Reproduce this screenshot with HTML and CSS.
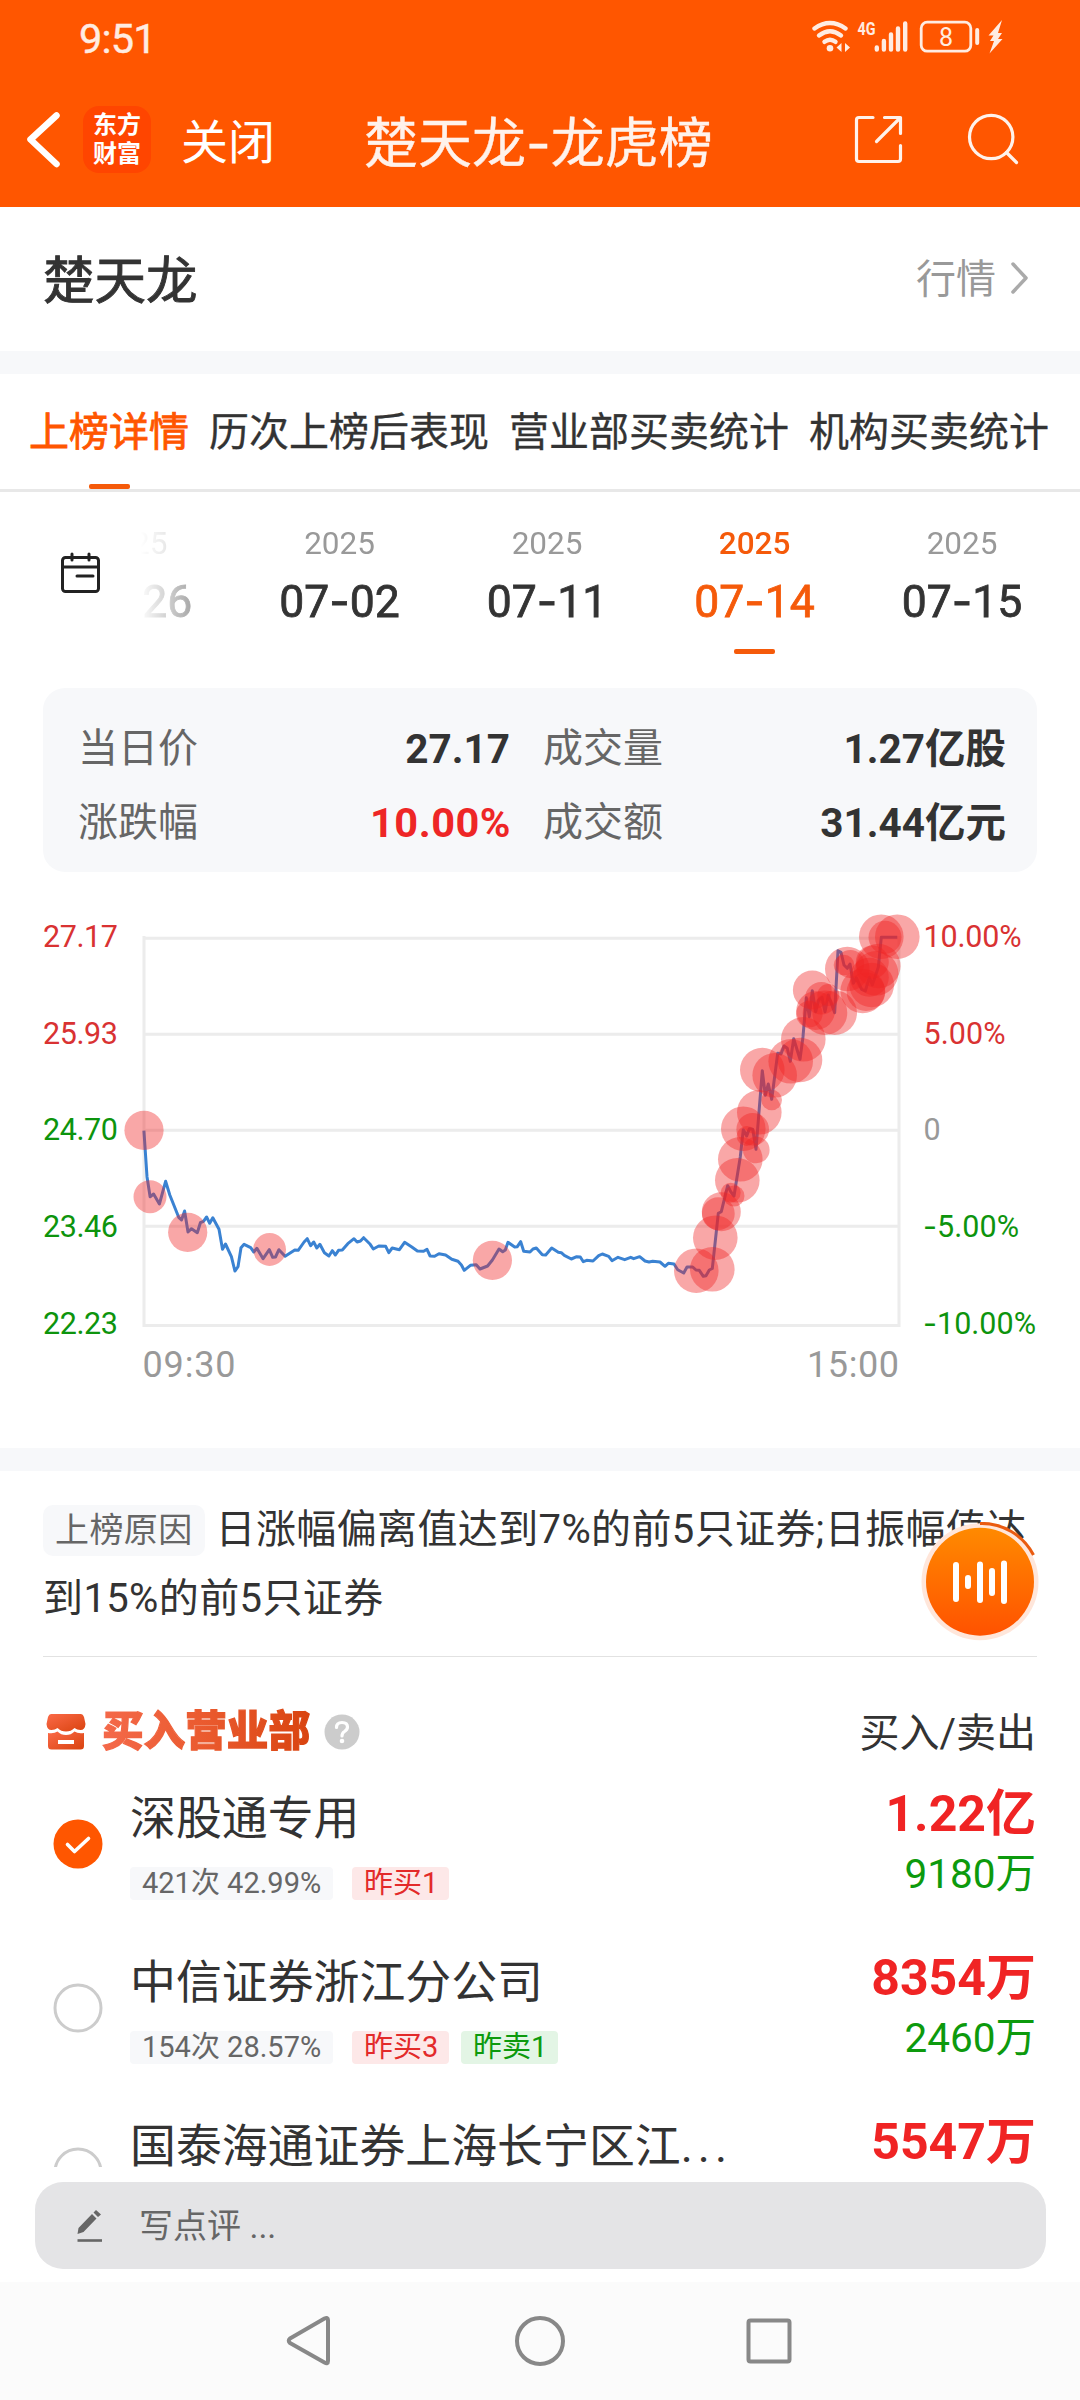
FILE: index.html
```html
<!DOCTYPE html>
<html lang="zh-CN">
<head>
<meta charset="utf-8">
<title>楚天龙-龙虎榜</title>
<link rel="stylesheet" href="styles.css">
</head>
<body>
<header class="top">
  <div class="status">
    <span class="clock">9:51</span>
    <svg class="status-icons" width="196" height="40" viewBox="810 17 196 40">
      <g fill="none" stroke="#ffece2" stroke-width="4.4" stroke-linecap="round">
        <path d="M814.500 28.500Q830 17.500 845.500 28.500"/>
        <path d="M819 35.500Q830 27 841 35.500"/>
        <path d="M824.500 41.800Q830 37.500 835.500 41.800"/>
      </g>
      <circle cx="830" cy="48.300" r="3.300" fill="#ffece2"/>
      <path fill="#ffece2" d="M836.500 47.500L841.500 43V52ZM850 47.500L845 43V52Z"/>
      <text class="net" x="857.500" y="34.500" textLength="18" lengthAdjust="spacingAndGlyphs">4G</text>
      <g stroke="#ffece2" stroke-width="4.400" stroke-linecap="round">
        <path d="M876.800 47.500V49.500M883.900 41V49.500M891 34.500V49.500M898 28.500V49.500M905.200 23.500V49.500"/>
      </g>
      <rect x="921.200" y="22.200" width="49.600" height="29" rx="6" fill="none" stroke="#ffece2" stroke-width="2.800"/>
      <text class="charge" x="946" y="46" text-anchor="middle">8</text>
      <path d="M977.200 30V43" stroke="#ffece2" stroke-width="4" stroke-linecap="round"/>
      <path fill="#ffece2" d="M1002 20L988.500 35.500H993.500L990 41H994L989.500 53.500L1002.500 39H998L1002 33H998Z"/>
    </svg>
  </div>
  <nav class="nav">
    <svg class="back" width="40" height="60" viewBox="24 110 40 60"><path d="M56.500 115.500L30.500 139.500L56.500 164" fill="none" stroke="#fff" stroke-width="6.500" stroke-linecap="round" stroke-linejoin="round"/></svg>
    <div class="logo"><span>东方</span><span>财富</span></div>
    <span class="close">关闭</span>
    <h1 class="title">楚天龙<span class="dash">-</span>龙虎榜</h1>
    <svg class="act" width="180" height="60" viewBox="850 110 180 60" fill="none" stroke="#fff2eb" stroke-width="3.200" stroke-linecap="round" stroke-linejoin="round">
      <path d="M873 117.500H859Q856.500 117.500 856.500 120V159Q856.500 161.500 859 161.500H898Q900.500 161.500 900.500 159V145.500M884.500 117.500H900.500V133.500M899.500 118.500L876.500 141.500"/>
      <circle cx="991.200" cy="137" r="21.700"/><path d="M1006.500 152.500L1016.500 162.500"/>
    </svg>
  </nav>
</header>

<section class="stock">
  <h2>楚天龙</h2>
  <a class="quote">行情<svg width="20" height="34" viewBox="0 0 20 34"><path d="M3 3L16 17L3 31" fill="none" stroke="#aaa" stroke-width="3.500" stroke-linecap="round" stroke-linejoin="round"/></svg></a>
</section>

<div class="band"></div>

<nav class="tabs">
  <span class="tab on">上榜详情</span><span class="tab">历次上榜后表现</span><span class="tab">营业部买卖统计</span><span class="tab">机构买卖统计</span>
</nav>

<section class="dates">
  <div class="cal">
    <svg width="44" height="44" viewBox="0 0 44 44" fill="none" stroke="#222" stroke-width="3" stroke-linecap="round">
      <rect x="3.500" y="6.500" width="36" height="34" rx="3"/><path d="M4 16H39M13 3V9M30 3V9M18 25H34"/>
    </svg>
  </div>
  <div class="strip">
    <div class="date"><small>2025</small><b>06<span class="dash">-</span>26</b></div>
    <div class="date"><small>2025</small><b>07<span class="dash">-</span>02</b></div>
    <div class="date"><small>2025</small><b>07<span class="dash">-</span>11</b></div>
    <div class="date on"><small>2025</small><b>07<span class="dash">-</span>14</b></div>
    <div class="date"><small>2025</small><b>07<span class="dash">-</span>15</b></div>
  </div>
</section>

<section class="card">
  <div class="cell"><span>当日价</span><b>27.17</b></div>
  <div class="cell"><span>成交量</span><b>1.27亿股</b></div>
  <div class="cell"><span>涨跌幅</span><b class="up">10.00%</b></div>
  <div class="cell"><span>成交额</span><b>31.44亿元</b></div>
</section>

<svg class="chart" width="1080" height="576" viewBox="0 872 1080 576">
  <path class="grid" d="M144 936V1325.500H899V936M144 938.300H899M144 1034.300H899M144 1130.300H899M144 1226.300H899"/>
  <polyline class="price" points="143.900,1130.700 147,1176.700 150.100,1196.700 153.600,1194 159.400,1204 165.600,1181.300 169.800,1195 178.700,1217.300 181.500,1220 184.600,1211 188,1232 191.500,1228.700 197.300,1232.700 200.400,1222.700 203.500,1221.300 206.600,1217 209.700,1223.300 212.800,1217.700 219,1229.300 222.500,1249.300 225.500,1244 231.400,1256.700 234.900,1271 238,1266.700 241,1247.700 244.100,1244.300 250.700,1247.700 253.800,1252 256.900,1248.300 263.100,1258.700 269.300,1249.700 272.700,1257.300 275.500,1257 278.900,1249.700 285.100,1256.300 294.800,1250 298.200,1250.300 304.100,1242 307.200,1238.700 310.600,1245.700 313.700,1242 316.800,1248 319.900,1244.300 324.400,1252.700 328.900,1256 332.300,1250.700 335.400,1255 338.500,1250.300 342.300,1250 347.800,1243.700 354,1238.700 357.100,1242 360.500,1241 363.600,1237.700 370.200,1244.300 373.300,1249 378.800,1246 385.700,1246.300 388.800,1252.700 392.200,1248 399.400,1249.700 404.600,1242.300 411.800,1247 417.400,1251 423.600,1251.300 427,1249.300 430.100,1256 434.600,1256.300 439,1253.700 445.600,1255 451.800,1259.300 458,1261.300 461.400,1265 464.200,1270.300 470.400,1265.300 476.200,1264.700 480,1269 487.600,1266 492.400,1260 499,1249 502.700,1251.700 505.300,1250 508,1242.300 514.700,1247 517.300,1246.700 520.700,1241.700 523.700,1251.300 530,1252 533,1249 536.300,1248 542.300,1254.700 545.700,1255 551.700,1248 558.300,1252.300 561.300,1252.700 564.300,1255.300 571.300,1259 576.700,1256.700 580.300,1257 583.300,1261.700 586.700,1260.300 593,1261 598.700,1255.700 602.300,1254 608.700,1256.300 612,1260.700 618,1257.300 624.700,1259.700 630.700,1257.300 633.700,1258.700 639.700,1256.700 645,1261 649,1262 652.700,1261.300 660,1262 665,1266.300 668.300,1263.300 674,1264 677.700,1269.700 683.700,1273 687,1267 692.700,1267 696,1270 699.300,1270.300 703.300,1276.300 706,1275.700 709.300,1270 712.300,1268.500 718.300,1213.300 721.300,1211.700 727.700,1185.700 730.700,1191.700 734,1196 740.300,1156.700 743.300,1129.700 746.700,1136 749.300,1128.700 752.700,1129.300 756,1149.300 762.300,1070.700 765.300,1095.300 768.300,1084 771.700,1099.300 777.700,1053.300 781,1054 784,1046 787.300,1048.300 790.300,1061.300 793.700,1038.700 800,1059.300 803,1036.700 806.300,997.700 809.300,1016.700 812.300,990.700 815.700,1011.700 818.700,1000 822,997.300 825,1011.700 828.300,995 834.700,1012.700 838,950.700 841,952.300 844,965 847.300,968.300 850,964 853.300,983.300 856.300,977.700 861.700,989.300 865.300,991 869.300,977.300 872.300,985 878.300,967.300 881.300,937.300 897.300,937.300"/>
  <g class="dots">
    <circle cx="144" cy="1130.300" r="19.600"/><circle cx="150" cy="1196.700" r="16.500"/><circle cx="187.700" cy="1232.300" r="19.600"/><circle cx="269.600" cy="1249.500" r="16.400"/><circle cx="492.400" cy="1260.300" r="19.600"/>
    <circle cx="696.300" cy="1270.700" r="22.300"/><circle cx="712.300" cy="1269.300" r="22.300"/><circle cx="715.300" cy="1237.700" r="22.300"/><circle cx="721.300" cy="1211.700" r="19.500"/><circle cx="718.300" cy="1213.700" r="16.400"/>
    <circle cx="730.700" cy="1192.700" r="10"/><circle cx="734" cy="1196" r="10.500"/><circle cx="737.300" cy="1180.300" r="22.300"/><circle cx="740.300" cy="1159.300" r="22.300"/><circle cx="743.300" cy="1128.700" r="22.300"/>
    <circle cx="746.700" cy="1136" r="10"/><circle cx="752.700" cy="1129.300" r="16.300"/><circle cx="756.300" cy="1150" r="13.300"/><circle cx="759.300" cy="1112.300" r="22.300"/><circle cx="762.300" cy="1070" r="22.300"/>
    <circle cx="771.700" cy="1100" r="10.300"/><circle cx="774.700" cy="1075.300" r="22.300"/><circle cx="790.700" cy="1061.300" r="22.300"/><circle cx="800" cy="1060" r="22.300"/><circle cx="803.300" cy="1039.300" r="22.300"/>
    <circle cx="812.300" cy="990" r="19.400"/><circle cx="809.300" cy="1014" r="13.300"/><circle cx="815.700" cy="1010.700" r="19.400"/><circle cx="821.300" cy="998.300" r="16.300"/><circle cx="828.300" cy="995" r="11"/>
    <circle cx="825" cy="1012.700" r="22.300"/><circle cx="834.700" cy="1012.700" r="22.300"/><circle cx="847.300" cy="969" r="22.300"/><circle cx="844" cy="965" r="10.300"/><circle cx="850.300" cy="964" r="14"/>
    <circle cx="862.700" cy="991" r="22.300"/><circle cx="866" cy="991.700" r="19.300"/><circle cx="871.700" cy="985" r="22.300"/><circle cx="869.300" cy="977.300" r="19.500"/><circle cx="876" cy="973.300" r="22.300"/>
    <circle cx="878.300" cy="966" r="22.300"/><circle cx="872.300" cy="962" r="16.500"/><circle cx="881.300" cy="936.700" r="22.300"/><circle cx="885" cy="937.300" r="16.500"/><circle cx="897.300" cy="936.700" r="22.300"/>
  </g>
  <g class="axis">
    <text class="r" x="43" y="947" textLength="75">27.17</text><text class="r" x="43" y="1044" textLength="75">25.93</text><text class="g" x="43" y="1140" textLength="75">24.70</text><text class="g" x="43" y="1237" textLength="75">23.46</text><text class="g" x="43" y="1334" textLength="75">22.23</text>
    <text class="r" x="923.500" y="947" textLength="98">10.00%</text><text class="r" x="923.500" y="1044" textLength="82">5.00%</text><text class="n" x="923.500" y="1140">0</text><text class="g" x="923" y="1237" textLength="96"><tspan class="dash">-</tspan>5.00%</text><text class="g" x="923" y="1334" textLength="113"><tspan class="dash">-</tspan>10.00%</text>
  </g>
  <g class="time"><text x="142.500" y="1377" textLength="93">09:30</text><text x="807" y="1377" textLength="92">15:00</text></g>
</svg>

<div class="band"></div>

<section class="reason">
  <p><span class="label">上榜原因</span>日涨幅偏离值达到7%的前5只证券;日振幅值达<br>到15%的前5只证券</p>
</section>

<section class="list">
  <div class="head">
    <svg class="shop" width="40" height="36" viewBox="0 0 40 36">
      <defs><linearGradient id="shop" x1="0" y1="0" x2="1" y2="1"><stop offset="0" stop-color="#fb6a48"/><stop offset="1" stop-color="#d9430f"/></linearGradient></defs>
      <path fill="url(#shop)" d="M5 0H35Q37 0 38 3L39.500 10Q39 16 34.500 16Q31 16 28.500 14Q25 17.500 20 17.500Q15 17.500 11.500 14Q9 16 5.500 16Q1 16 .5 10L2 3Q3 0 5 0Z"/>
      <path fill="url(#shop)" fill-rule="evenodd" d="M2 19Q8 20 11.500 17.500Q15 21 20 21Q25 21 28.500 17.500Q32 20 38 19V32Q38 35.500 34.500 35.500H5.500Q2 35.500 2 32ZM12 26V30H28V26Z"/>
    </svg>
    <span class="heading">买入营业部</span>
    <svg class="help" width="36" height="36" viewBox="0 0 36 36"><circle cx="18" cy="18" r="17.500" fill="#ccc"/><path d="M12.500 13.500Q12.500 8.500 18 8.500Q23.500 8.500 23.500 13Q23.500 15.500 20.500 17.500Q18 19 18 22" fill="none" stroke="#fff" stroke-width="3.200" stroke-linecap="round"/><circle cx="18" cy="27" r="2.300" fill="#fff"/></svg>
    <span class="cols">买入/卖出</span>
  </div>
  <div class="row">
    <svg class="pick" width="50" height="50" viewBox="0 0 50 50"><circle cx="25" cy="25" r="24.500" fill="#ff5600"/><path d="M14.500 25.500L21.500 32.500L35.500 19.500" fill="none" stroke="#fff" stroke-width="3.600" stroke-linecap="round" stroke-linejoin="round"/></svg>
    <div class="who"><span class="name">深股通专用</span><div class="tags"><i class="tag stat">421次 42.99%</i><i class="tag buy">昨买1</i></div></div>
    <div class="amt"><b>1.22亿</b><span>9180万</span></div>
  </div>
  <div class="row">
    <svg class="pick" width="50" height="50" viewBox="0 0 50 50"><circle cx="25" cy="25" r="23" fill="none" stroke="#ccc" stroke-width="3"/></svg>
    <div class="who"><span class="name">中信证券浙江分公司</span><div class="tags"><i class="tag stat">154次 28.57%</i><i class="tag buy">昨买3</i><i class="tag sell">昨卖1</i></div></div>
    <div class="amt"><b>8354万</b><span>2460万</span></div>
  </div>
  <div class="row cut">
    <svg class="pick" width="50" height="20" viewBox="0 0 50 20"><circle cx="25" cy="25" r="23" fill="none" stroke="#ccc" stroke-width="3"/></svg>
    <div class="who"><span class="name">国泰海通证券上海长宁区江<span class="more">...</span></span></div>
    <div class="amt"><b>5547万</b></div>
  </div>
</section>

<div class="comment">
  <svg width="28" height="36" viewBox="0 0 28 36"><path d="M1.500 26L2.500 20L16 6L20.500 10.500L7.500 24Z M17.500 4.500L20 2L25 6.500L22 9Z" fill="#666"/><path d="M1.500 32.500H26" stroke="#666" stroke-width="2.600"/></svg>
  <span>写点评 ...</span>
</div>

<footer class="sys">
  <svg width="1080" height="118" viewBox="0 2282 1080 118" fill="none" stroke="#888" stroke-width="4" stroke-linejoin="round">
    <path d="M290 2338.500L324.500 2318.500Q328 2317 328 2320V2361Q328 2364.500 324.500 2362.500L290 2343Q287.500 2340.700 290 2338.500Z"/>
    <circle cx="540" cy="2341" r="23"/><rect x="748.500" y="2320.500" width="41" height="41" rx="2"/>
  </svg>
</footer>

<svg class="fab" width="120" height="120" viewBox="920 1522 120 120">
  <defs><linearGradient id="fab" x1="0" y1="0" x2="0" y2="1"><stop offset="0" stop-color="#ff8a00"/><stop offset="1" stop-color="#ff5200"/></linearGradient></defs>
  <circle cx="980" cy="1581.700" r="58.500" fill="#ffe6da"/><circle cx="980" cy="1581.700" r="54" fill="url(#fab)"/>
  <path d="M980 1523.500A58 58 0 0 1 1033.500 1555" fill="none" stroke="#ea5b10" stroke-width="3"/>
  <path d="M956 1565V1599M968 1578V1586M980 1564.500V1600M992 1571V1593M1004 1563.500V1601" stroke="#fff" stroke-width="6" stroke-linecap="round"/>
</svg>
</body>
</html>
```
FILE: styles.css
```css
* { box-sizing: border-box; margin: 0; padding: 0; }
body {
  width: 1080px; height: 2400px; overflow: hidden; position: relative;
  display: flex; flex-direction: column;
  background: #fff; color: #333;
  font-family: Roboto, "Noto Sans CJK SC", sans-serif; font-size: 40px; white-space: nowrap;
}
body > * { flex-shrink: 0; }
svg { display: block; flex-shrink: 0; }
i { font-style: normal; }
.dash { font-family: Inter, sans-serif; }

.top { height: 207px; background: #ff5600; color: #fff; }
.status { height: 72px; padding: 2px 74px 0 79px; display: flex; align-items: center; justify-content: space-between; }
.clock { font-size: 41.500px; color: #ffece2; letter-spacing: -.8px; padding-top: 2px; -webkit-text-stroke: .4px currentColor; }
.net { font: bold 19px Roboto, sans-serif; fill: #ffece2; }
.charge { font: 25px Roboto, sans-serif; fill: #ffece2; }
.nav { height: 135px; padding: 0 50px 0 24px; display: flex; align-items: center; }
.back { margin-right: 19px; }
.logo {
  width: 68px; height: 67px; border-radius: 16px; background: #ff4500;
  display: flex; flex-direction: column; align-items: center; padding-top: 2px;
  font: bold 24px/29px "Noto Sans CJK SC", sans-serif;
}
.close { width: 183px; margin-left: 30px; padding-bottom: 3px; font-size: 47px; }
.title { font-size: 54px; font-weight: 400; color: #fff2eb; -webkit-text-stroke: .4px currentColor; }
.act { margin-left: auto; }

.stock { height: 144px; padding: 0 50px 6px 43px; display: flex; align-items: center; justify-content: space-between; }
.stock h2 { font-size: 51.500px; font-weight: 400; -webkit-text-stroke: .9px #333; }
.quote { display: flex; align-items: center; gap: 14px; color: #999; }
.quote svg { margin-top: 3px; }

.band { height: 23px; background: #f7f8fa; }

.tabs { height: 118px; padding: 0 30px 0 29px; display: flex; gap: 20px; border-bottom: 3px solid #e8e8e8; line-height: 117px; }
.tab { -webkit-text-stroke: .3px currentColor; }
.tab.on { color: #ff5600; position: relative; -webkit-text-stroke-width: .8px; }
.tab.on::after, .date.on::after { content: ""; width: 41px; height: 5px; border-radius: 2px; background: #f55a0a; }
.tab.on::after { position: absolute; left: 60px; bottom: 0; }

.dates { height: 196px; display: flex; }
.cal { width: 140px; padding: 59px 0 0 59px; }
.strip {
  flex: 1; display: flex; overflow: hidden;
  -webkit-mask-image: linear-gradient(90deg, transparent, #000 120px);
  mask-image: linear-gradient(90deg, transparent, #000 120px);
}
.date { flex: 0 0 207.500px; display: flex; flex-direction: column; align-items: center; padding-top: 33px; }
.date:first-child { margin-left: -111.700px; }
.date small { font-size: 31.500px; line-height: 38px; color: #999; }
.date b { font-size: 44.500px; line-height: 52px; font-weight: 400; margin-top: 12px; -webkit-text-stroke: .8px currentColor; }
.date.on, .date.on small { color: #f55a0a; }
.date.on small { font-weight: 500; }
.date.on::after { margin-top: 21px; }

.card {
  height: 184px; margin: 0 43px; padding: 24px 30px 12px 35px; border-radius: 22px; background: #f7f8fa;
  display: grid; grid-template-columns: 432px 463px; grid-template-rows: 74px 74px; column-gap: 33px; align-items: center;
}
.cell { display: flex; justify-content: space-between; color: #666; line-height: 50px; }
.cell b { color: #333; font-size: 40.500px; }
.cell .up { color: #ee2626; font-size: 41.500px; letter-spacing: .5px; margin-right: -1px; }

.grid { fill: none; stroke: #ececec; stroke-width: 3; }
.price { fill: none; stroke: #3a82d2; stroke-width: 3; stroke-linejoin: round; }
.dots { fill: #f02222; fill-opacity: .4; }
.axis { font-size: 30.500px; }
.time { font-size: 36px; fill: #999; }
.r { fill: #d93232; }
.g { fill: #0d940d; }
.n { fill: #999; }

.reason { height: 186px; margin: 0 43px; padding-top: 24px; border-bottom: 1px solid #e2e2e2; }
.reason p { line-height: 69px; letter-spacing: .38px; }
.label {
  display: inline-block; height: 51px; padding: 0 12px; margin-right: 11px; border-radius: 10px;
  background: #f7f8fa; color: #666; font-size: 34px; line-height: 50px; vertical-align: 1px;
}

.list { height: 511px; padding: 0 44px 0 43px; overflow: hidden; }
.head { height: 78px; margin-top: 36px; display: flex; align-items: center; }
.shop { margin: 0 16px 0 3px; }
.heading {
  font-size: 41.600px; font-weight: 900; line-height: 60px; -webkit-text-stroke: 1.2px transparent;
  background: linear-gradient(90deg, #f4694a, #ea5a2e 50%, #d94410); -webkit-background-clip: text; background-clip: text; color: transparent;
}
.help { margin-left: 14px; }
.cols { margin-left: auto; padding-bottom: 5px; }
.row { height: 164px; display: flex; }
.pick { margin: 48px 27px 0 10px; }
.who { flex: 1; padding-top: 13px; }
.name { display: block; font-size: 45.900px; line-height: 68px; }
.more { letter-spacing: 5px; }
.tags { display: flex; margin-top: 15px; }
.tag { height: 33px; padding: 0 12px; border-radius: 4px; font-size: 29px; line-height: 32px; }
.tag + .tag { margin-left: 12px; }
.tag.stat + .tag { margin-left: 19px; }
.stat { width: 203px; background: #f7f8fa; color: #666; }
.buy, .sell { width: 97px; }
.buy { background: #fde8e8; color: #e32a2a; }
.sell { background: #e3f5e5; color: #0d9a0d; }
.amt { display: flex; flex-direction: column; align-items: flex-end; padding-top: 9px; }
.amt b { font-size: 50px; line-height: 68px; color: #f02424; }
.amt span { line-height: 53px; color: #0d9a0d; font-size: 40.500px; }
.row.cut { height: 69px; }

.comment {
  width: 1011px; height: 87px; margin: 14px 0 13px 35px; padding: 0 41px; border-radius: 28px;
  display: flex; align-items: center; gap: 35px; background: #e4e4e6; color: #666; font-size: 34px;
}
.comment span { padding-bottom: 4px; }
.sys { height: 118px; background: #fbfbfb; }
.fab { position: absolute; left: 920px; top: 1522px; }
```
